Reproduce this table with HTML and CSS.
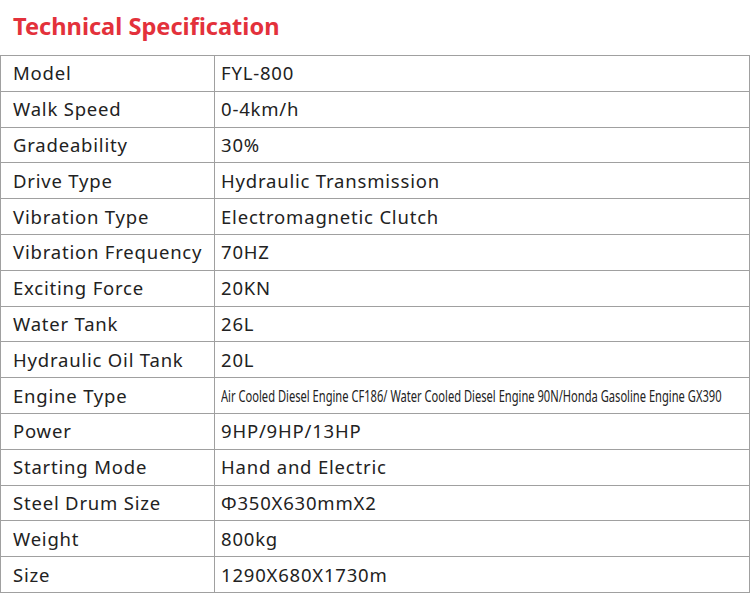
FILE: index.html
```html
<!DOCTYPE html>
<html>
<head>
<meta charset="utf-8">
<link rel="stylesheet" href="styles.css">
</head>
<body>
<h1 class="title">Technical Specification</h1>
<table class="spec">
<colgroup><col class="ck"><col class="cv"></colgroup>
<tr><td class="k">Model</td><td class="v">FYL-800</td></tr>
<tr><td class="k">Walk Speed</td><td class="v">0-4km/h</td></tr>
<tr><td class="k">Gradeability</td><td class="v">30%</td></tr>
<tr><td class="k">Drive Type</td><td class="v">Hydraulic Transmission</td></tr>
<tr><td class="k">Vibration Type</td><td class="v">Electromagnetic Clutch</td></tr>
<tr><td class="k">Vibration Frequency</td><td class="v">70HZ</td></tr>
<tr><td class="k">Exciting Force</td><td class="v">20KN</td></tr>
<tr><td class="k">Water Tank</td><td class="v">26L</td></tr>
<tr><td class="k">Hydraulic Oil Tank</td><td class="v">20L</td></tr>
<tr><td class="k">Engine Type</td><td class="v clip"><span class="narrow">Air Cooled Diesel Engine CF186/ Water Cooled Diesel Engine 90N/Honda Gasoline Engine GX390</span></td></tr>
<tr><td class="k">Power</td><td class="v">9HP/9HP/13HP</td></tr>
<tr><td class="k">Starting Mode</td><td class="v">Hand and Electric</td></tr>
<tr><td class="k">Steel Drum Size</td><td class="v">Φ350X630mmX2</td></tr>
<tr><td class="k">Weight</td><td class="v">800kg</td></tr>
<tr><td class="k">Size</td><td class="v">1290X680X1730m</td></tr>
</table>
</body>
</html>
```
FILE: styles.css
```css
html, body {
  margin: 0;
  padding: 0;
  background: #fff;
}
body {
  font-family: "Noto Sans", "Open Sans", sans-serif;
  color: #222;
}
.title {
  margin: 0;
  padding: 10px 0 0 13px;
  height: 45px;
  box-sizing: border-box;
  font-size: 23.6px;
  line-height: 32px;
  font-weight: 700;
  color: #e3313b;
}
.spec {
  border-collapse: collapse;
  table-layout: fixed;
  width: 750px;
  margin-top: 10px;
}
.ck {
  width: 214px;
}
.spec td {
  border: 1px solid #a0a0a0;
  height: 35.8px;
  padding: 0;
  font-size: 18.5px;
  line-height: 24px;
  letter-spacing: 0.8px;
  box-sizing: border-box;
  vertical-align: middle;
  white-space: nowrap;
}
.spec .k {
  padding-left: 12px;
}
.spec .v {
  padding-left: 6px;
}
.spec .clip {
  overflow: hidden;
}
.narrow {
  display: inline-block;
  font-size: 16px;
  letter-spacing: 0;
  transform: scaleX(0.696);
  transform-origin: left center;
}
```
